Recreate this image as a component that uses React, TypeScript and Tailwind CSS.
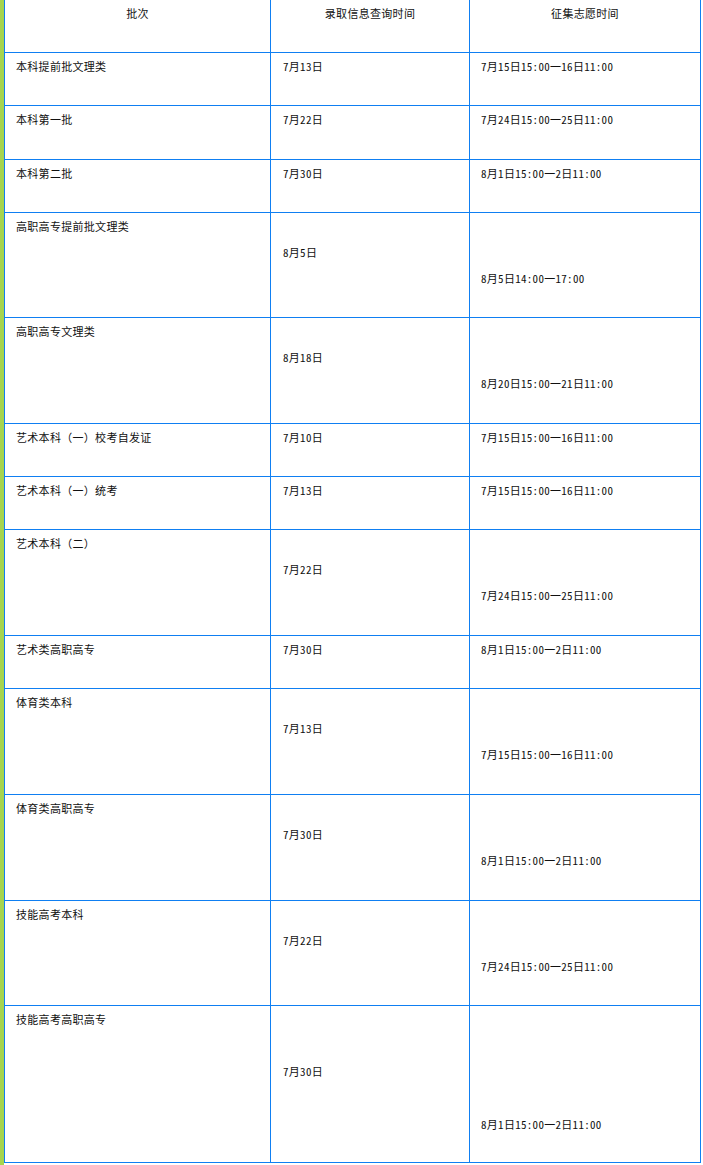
import React from "react";

type Row = {
  a: string;
  b: string;
  bi: number;
  c: string;
  ci: number;
  h: string;
};

const rows: Row[] = [
  { a: "本科提前批文理类", b: "7月13日", bi: 0, c: "7月15日15:00一16日11:00", ci: 0, h: "h-[52px]" },
  { a: "本科第一批", b: "7月22日", bi: 0, c: "7月24日15:00一25日11:00", ci: 0, h: "h-[53px]" },
  { a: "本科第二批", b: "7月30日", bi: 0, c: "8月1日15:00一2日11:00", ci: 0, h: "h-[52px]" },
  { a: "高职高专提前批文理类", b: "8月5日", bi: 1, c: "8月5日14:00一17:00", ci: 2, h: "h-[104px]" },
  { a: "高职高专文理类", b: "8月18日", bi: 1, c: "8月20日15:00一21日11:00", ci: 2, h: "h-[105px]" },
  { a: "艺术本科（一）校考自发证", b: "7月10日", bi: 0, c: "7月15日15:00一16日11:00", ci: 0, h: "h-[52px]" },
  { a: "艺术本科（一）统考", b: "7月13日", bi: 0, c: "7月15日15:00一16日11:00", ci: 0, h: "h-[52px]" },
  { a: "艺术本科（二）", b: "7月22日", bi: 1, c: "7月24日15:00一25日11:00", ci: 2, h: "h-[105px]" },
  { a: "艺术类高职高专", b: "7月30日", bi: 0, c: "8月1日15:00一2日11:00", ci: 0, h: "h-[52px]" },
  { a: "体育类本科", b: "7月13日", bi: 1, c: "7月15日15:00一16日11:00", ci: 2, h: "h-[105px]" },
  { a: "体育类高职高专", b: "7月30日", bi: 1, c: "8月1日15:00一2日11:00", ci: 2, h: "h-[105px]" },
  { a: "技能高考本科", b: "7月22日", bi: 1, c: "7月24日15:00一25日11:00", ci: 2, h: "h-[104px]" },
  { a: "技能高考高职高专", b: "7月30日", bi: 2, c: "8月1日15:00一2日11:00", ci: 4, h: "h-[156px]" },
];

function Lines({ text, index }: { text: string; index: number }) {
  const items: string[] = [];
  for (let i = 0; i < index; i++) items.push("");
  items.push(text);
  return (
    <div className="flex flex-col">
      {items.map((t, i) => (
        <div key={i} className="h-[26.2px] flex items-center whitespace-nowrap">
          {t}
        </div>
      ))}
    </div>
  );
}

export default function App() {
  return (
    <div
      className="w-[703px] h-[1165px] bg-white flex text-[11px] tracking-[0.3px] text-[#111]"
      style={{ fontFamily: '"Noto Sans Mono CJK SC", "Noto Sans CJK SC", sans-serif' }}
    >
      <div className="w-[4px] h-[1165px] bg-[#a6d54e] shrink-0" />
      <div className="w-[697px] shrink-0 self-start border-l border-r border-[#0f7ff2]">
        <div className="flex h-[53px] border-b border-[#0f7ff2]">
          <div className="w-[266px] shrink-0 border-r border-[#0f7ff2] flex flex-col items-center">
            <div className="h-[26.2px] flex items-center">批次</div>
          </div>
          <div className="w-[199px] shrink-0 border-r border-[#0f7ff2] flex flex-col items-center">
            <div className="h-[26.2px] flex items-center">录取信息查询时间</div>
          </div>
          <div className="flex-1 flex flex-col items-center">
            <div className="h-[26.2px] flex items-center">征集志愿时间</div>
          </div>
        </div>
        {rows.map((r, i) => (
          <div key={i} className={"flex box-content border-b border-[#0f7ff2] " + r.h}>
            <div className="w-[266px] shrink-0 border-r border-[#0f7ff2] pl-[11px]">
              <Lines text={r.a} index={0} />
            </div>
            <div className="w-[199px] shrink-0 border-r border-[#0f7ff2] pl-[12px]">
              <Lines text={r.b} index={r.bi} />
            </div>
            <div className="flex-1 pl-[11px]">
              <Lines text={r.c} index={r.ci} />
            </div>
          </div>
        ))}
      </div>
    </div>
  );
}
